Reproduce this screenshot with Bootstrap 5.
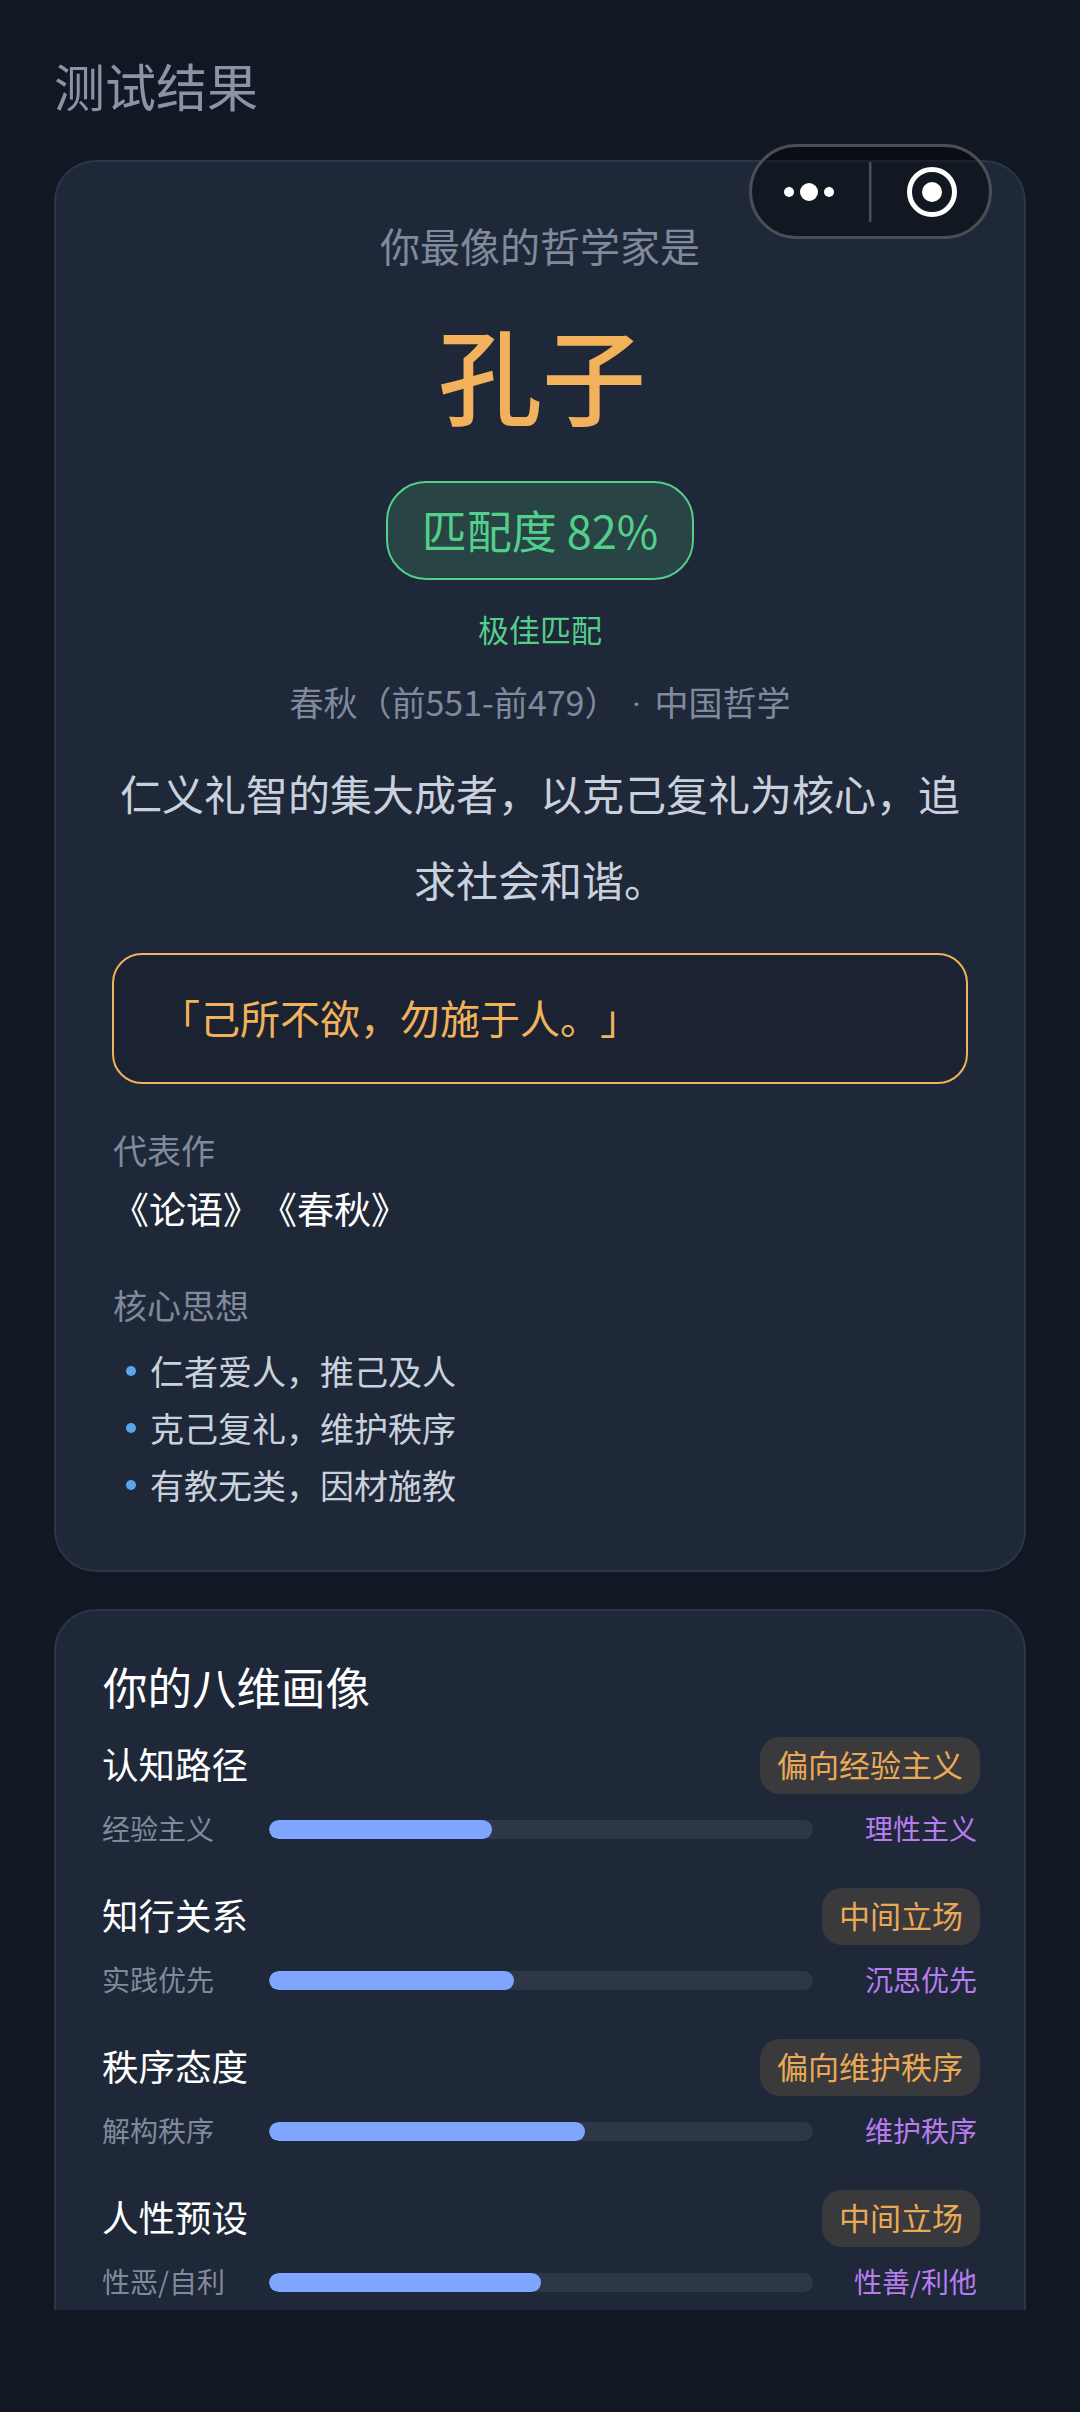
<!DOCTYPE html>
<html lang="zh-CN">
<head>
<meta charset="utf-8">
<title>测试结果</title>
<link rel="stylesheet" href="https://cdn.jsdelivr.net/npm/bootstrap@5.3.0/dist/css/bootstrap.min.css">
<style>
html,body{height:100%;}
body{background:#111723;font-family:"Noto Sans CJK SC","Noto Sans",sans-serif;color:#fff;overflow:hidden;text-spacing-trim:space-all;}
.stage{height:2310px;overflow:hidden;padding:0 54px;}
.page-title{font-size:51px;line-height:60px;color:#8a94a6;padding-top:55px;margin:0 0 45px;font-weight:400;}
.panel{background:#1f2838;border:2px solid #2b3548;border-radius:42px;color:#fff;}
.panel-hero{height:1412px;padding:0 56px;margin-bottom:37px;}
.hero-kicker{font-size:40px;line-height:56px;color:#808a9c;margin-top:55px;}
.hero-name{font-size:104px;line-height:130px;color:#f2b25b;margin-top:35px;font-weight:500;padding-left:4px;}
.match-pill{width:308px;height:99px;margin-top:43px;border:2px solid #52cf8a;border-radius:40px;background:#294445;color:#52cf8a;font-size:45px;padding-bottom:2px;}
.match-note{font-size:31px;line-height:40px;color:#52cf8a;margin-top:29px;}
.hero-era{font-size:34px;line-height:48px;color:#808a9c;margin-top:29px;}
.era-dot{font-family:"Roboto",sans-serif;margin:0 6px;}
.hero-desc{font-size:42px;line-height:86px;color:#c9d1dd;margin-top:22px;}
.hero-quote{height:131px;margin-top:31px;padding:0 0 3px 46px;border:2px solid #f2b25b;border-radius:30px;background:#1b2332;color:#f2b25b;font-size:40px;}
.sec-label{font-size:34px;line-height:48px;color:#808a9c;padding-left:1px;}
.sec-first{margin-top:42px;}
.sec-next{margin-top:47px;}
.sec-works{font-size:37px;line-height:52px;color:#fff;margin-top:8px;}
.idea-list{margin:13px 0 0;}
.idea-list li{font-size:34px;line-height:57px;color:#c9d1dd;padding-left:38px;position:relative;}
.idea-list li::before{content:"";position:absolute;left:14px;top:24px;width:10px;height:10px;border-radius:50%;background:#5aa6e8;}
.panel-dims{padding:0 44px 0 46px;height:760px;}
.dims-title{font-size:44.5px;line-height:60px;margin:45px 0 21px;font-weight:400;color:#fff;padding-left:1px;}
.dim-row{height:151px;}
.dim-head{height:57px;}
.dim-name{font-size:36.5px;line-height:54px;color:#fff;padding-bottom:3px;}
.dim-tag{height:57px;padding:0 17px 3px;border-radius:20px;background:#3a3a3c;color:#eaa957;font-size:31px;}
.dim-bar{margin-top:15px;}
.dim-left{width:167px;font-size:28px;line-height:38px;padding-bottom:2px;color:#808a9c;}
.dim-right{width:164px;margin-right:2px;font-size:28px;line-height:38px;padding-bottom:2px;color:#b67cf0;text-align:right;}
.dim-track{height:19px;width:544px;background:#2d3748;border-radius:10px;}
.dim-track .progress-bar{background:#7ea6ff;border-radius:10px;}
.capsule{position:absolute;left:749px;top:144px;width:243px;height:95px;}
</style>
</head>
<body>
<main class="stage">
  <h1 class="page-title">测试结果</h1>
  <section class="card panel panel-hero">
    <div class="text-center hero-kicker">你最像的哲学家是</div>
    <div class="text-center hero-name">孔子</div>
    <div class="d-flex justify-content-center"><div class="match-pill d-flex align-items-center justify-content-center">匹配度 82%</div></div>
    <div class="text-center match-note">极佳匹配</div>
    <div class="text-center hero-era">春秋（前551-前479） <span class="era-dot">·</span> 中国哲学</div>
    <div class="text-center hero-desc">仁义礼智的集大成者，以克己复礼为核心，追求社会和谐。</div>
    <div class="hero-quote d-flex align-items-center">「己所不欲，勿施于人。」</div>
    <div class="sec-label sec-first">代表作</div>
    <div class="sec-works">《论语》《春秋》</div>
    <div class="sec-label sec-next">核心思想</div>
    <ul class="list-unstyled idea-list">
      <li>仁者爱人，推己及人</li>
      <li>克己复礼，维护秩序</li>
      <li>有教无类，因材施教</li>
    </ul>
  </section>
  <section class="card panel panel-dims">
    <h2 class="dims-title">你的八维画像</h2>
    <div class="dim-row">
      <div class="dim-head d-flex justify-content-between align-items-center"><span class="dim-name">认知路径</span><span class="dim-tag d-flex align-items-center">偏向经验主义</span></div>
      <div class="dim-bar d-flex align-items-center"><span class="dim-left">经验主义</span><div class="progress dim-track"><div class="progress-bar" style="width:41%"></div></div><span class="dim-right">理性主义</span></div>
    </div>
    <div class="dim-row">
      <div class="dim-head d-flex justify-content-between align-items-center"><span class="dim-name">知行关系</span><span class="dim-tag d-flex align-items-center">中间立场</span></div>
      <div class="dim-bar d-flex align-items-center"><span class="dim-left">实践优先</span><div class="progress dim-track"><div class="progress-bar" style="width:45%"></div></div><span class="dim-right">沉思优先</span></div>
    </div>
    <div class="dim-row">
      <div class="dim-head d-flex justify-content-between align-items-center"><span class="dim-name">秩序态度</span><span class="dim-tag d-flex align-items-center">偏向维护秩序</span></div>
      <div class="dim-bar d-flex align-items-center"><span class="dim-left">解构秩序</span><div class="progress dim-track"><div class="progress-bar" style="width:58%"></div></div><span class="dim-right">维护秩序</span></div>
    </div>
    <div class="dim-row">
      <div class="dim-head d-flex justify-content-between align-items-center"><span class="dim-name">人性预设</span><span class="dim-tag d-flex align-items-center">中间立场</span></div>
      <div class="dim-bar d-flex align-items-center"><span class="dim-left">性恶/自利</span><div class="progress dim-track"><div class="progress-bar" style="width:50%"></div></div><span class="dim-right">性善/利他</span></div>
    </div>
  </section>
</main>
<svg class="capsule" viewBox="0 0 243 95" aria-hidden="true">
  <rect x="1.5" y="1.5" width="240" height="92" rx="46" fill="#000" fill-opacity=".4" stroke="#4b4e55" stroke-width="3"/>
  <circle cx="40" cy="48" r="5" fill="#fff"/><circle cx="60" cy="48" r="9" fill="#fff"/><circle cx="80" cy="48" r="5" fill="#fff"/>
  <rect x="120" y="18" width="2.5" height="60" fill="#4b4e55"/>
  <circle cx="183" cy="48" r="22.5" fill="none" stroke="#fff" stroke-width="5"/><circle cx="183" cy="48" r="10" fill="#fff"/>
</svg>
<script src="https://cdn.jsdelivr.net/npm/bootstrap@5.3.0/dist/js/bootstrap.bundle.min.js"></script>
</body>
</html>
